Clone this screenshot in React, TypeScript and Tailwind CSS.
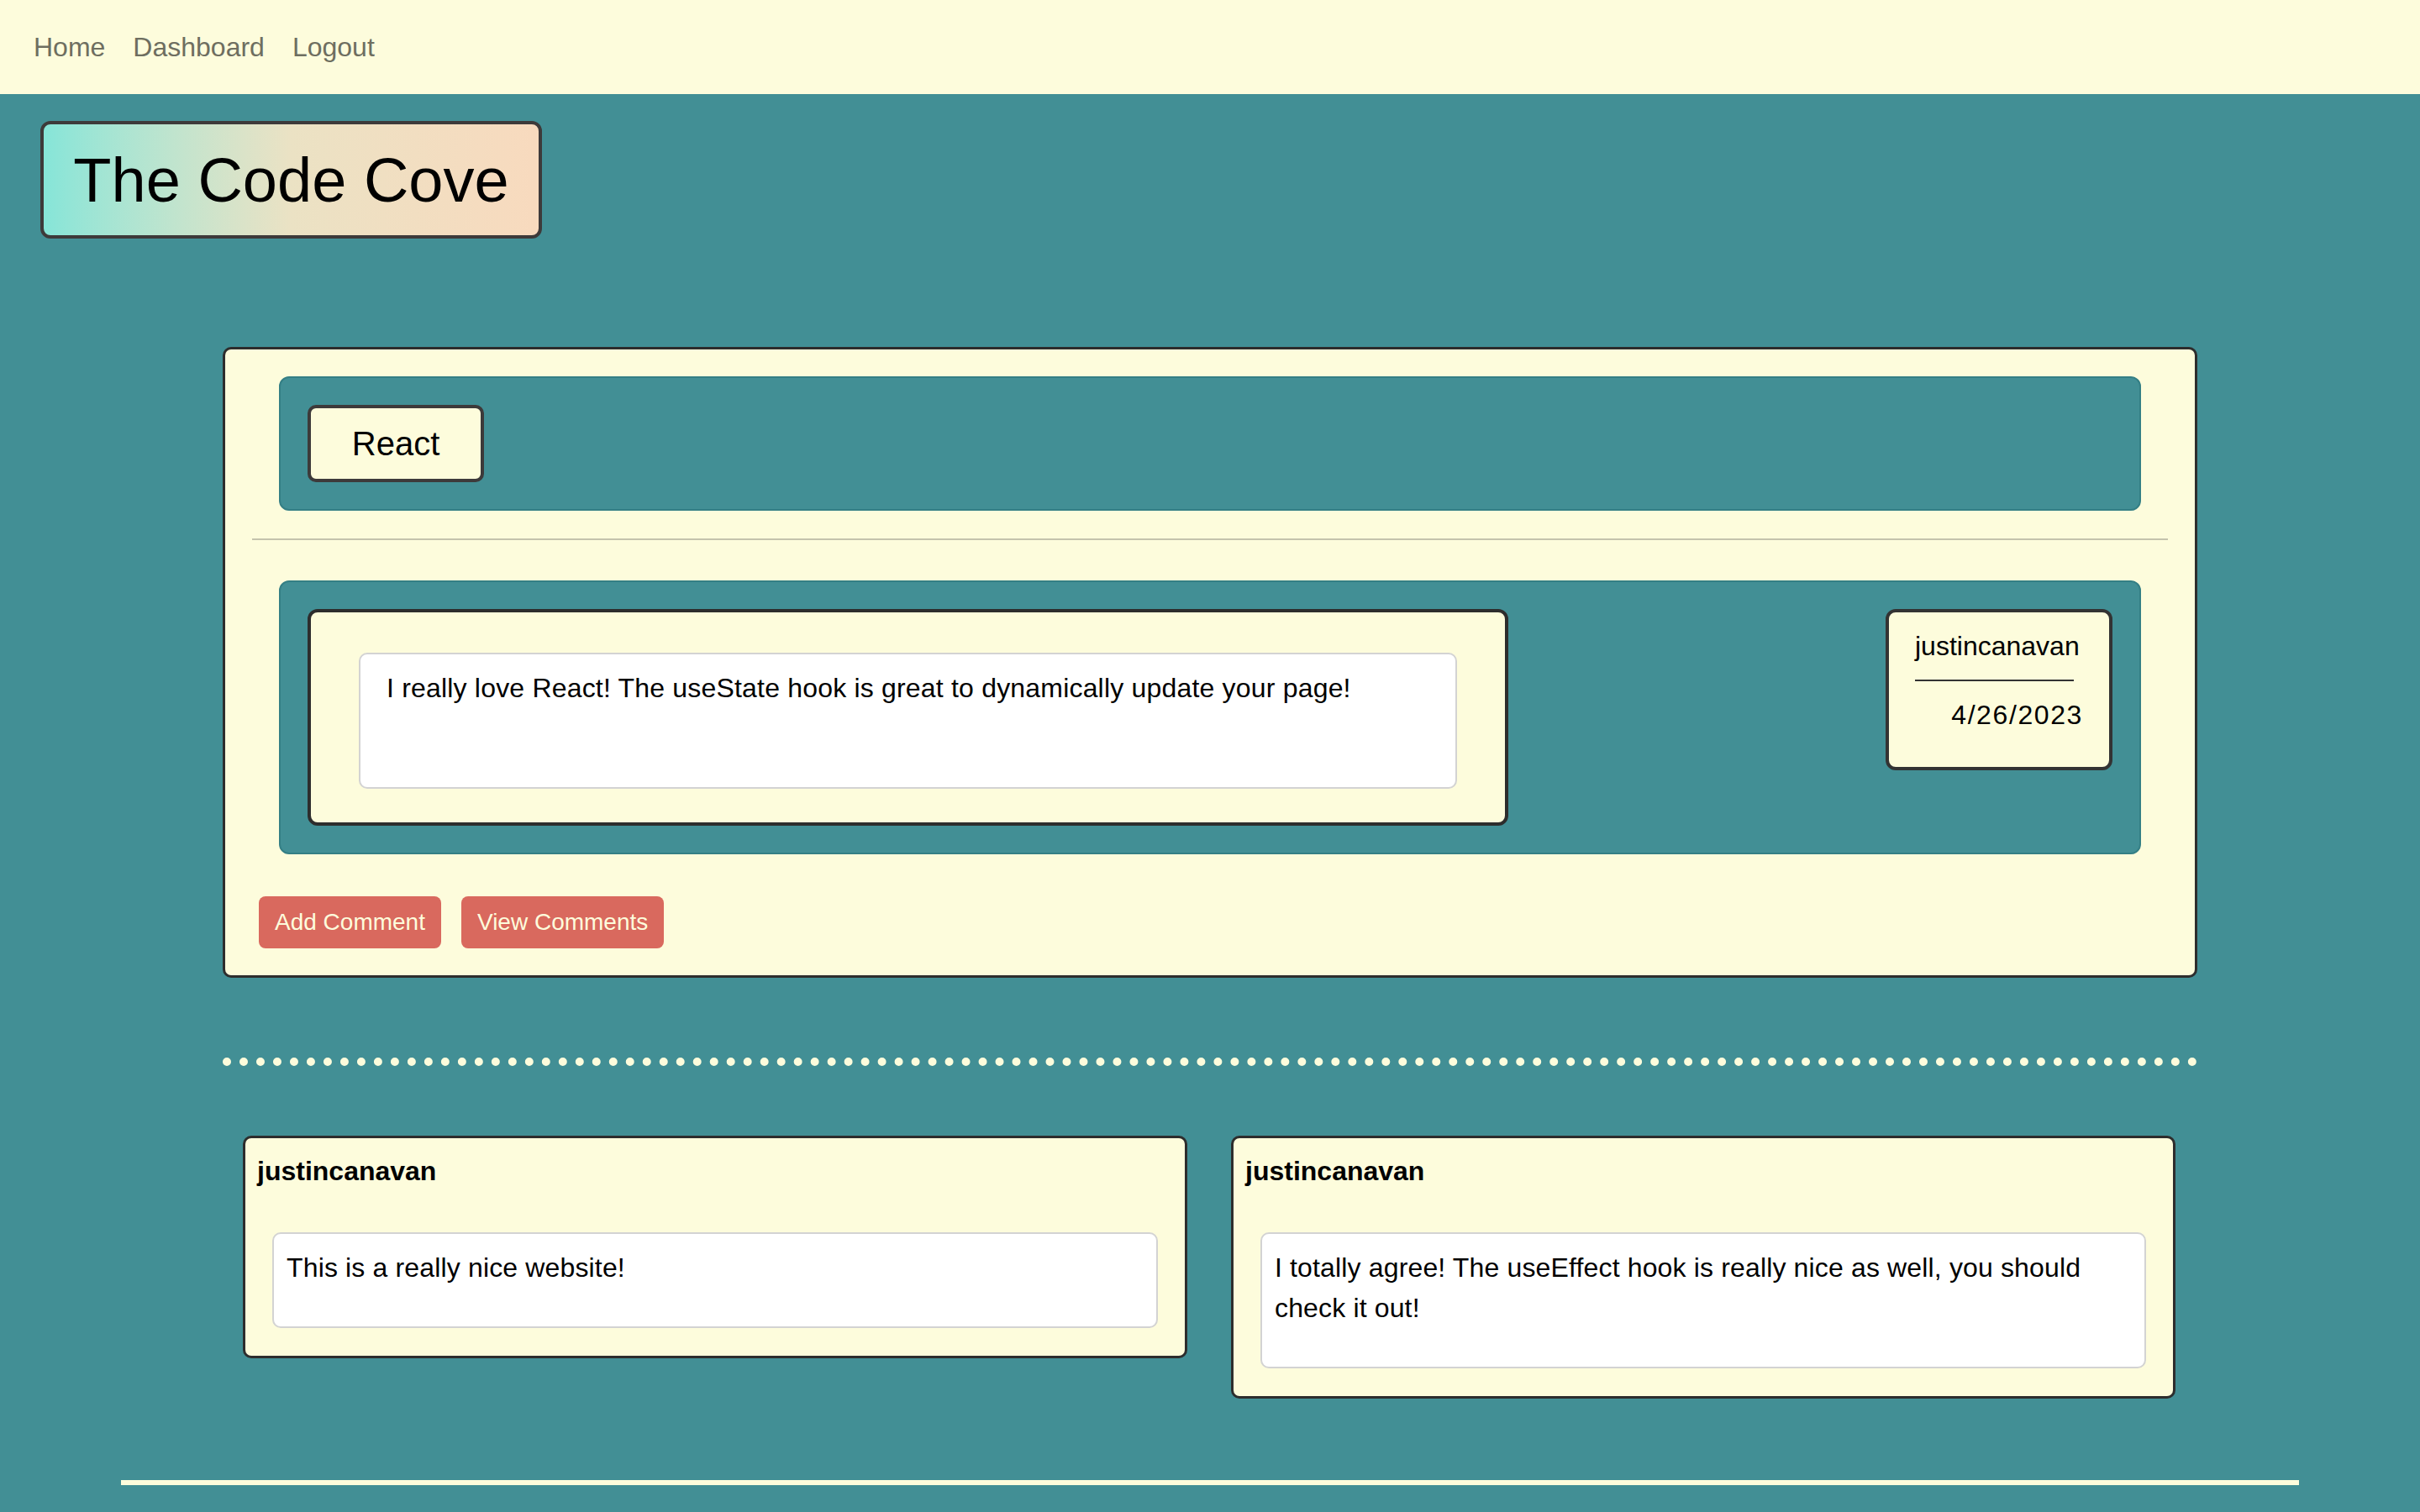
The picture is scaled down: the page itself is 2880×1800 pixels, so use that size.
import React from "react";

const font = { fontFamily: '"Liberation Sans", Arial, sans-serif' };

export default function App() {
  return (
    <div style={font} className="min-h-[1800px] bg-[#428f95] text-black">
      <nav className="flex h-[112px] items-center gap-[33px] bg-[#fdfcdc] pl-[40px] text-[32px] text-[#6e6e60]">
        <a>Home</a>
        <a>Dashboard</a>
        <a>Logout</a>
      </nav>

      <div className="ml-[48px] mt-[32px] flex h-[140px] w-[597px] items-center justify-center rounded-[12px] border-[4px] border-[#3d3a3a] bg-linear-to-r from-[#86e5d8] via-[#ebe2c4] to-[#f8dabe]">
        <h1 className="pt-[2px] text-[74px] leading-none">The Code Cove</h1>
      </div>

      <div className="mx-auto mt-[129px] w-[2350px] rounded-[10px] border-[3px] border-[#2d2d2d] bg-[#fdfcdc] px-[32px] pb-[32px] pt-[32px]">
        <div className="mx-[32px] rounded-[12px] border-2 border-[#347f85] bg-[#428f95] p-[32px]">
          <div className="flex h-[92px] w-[210px] items-center justify-center rounded-[10px] border-[4px] border-[#3d3a3a] bg-[#fdfcdc] text-[40px]">
            React
          </div>
        </div>

        <div className="mt-[33px] h-[2px] w-full bg-[#c4c3ad]" />

        <div className="mx-[32px] mt-[48px] flex items-start justify-between rounded-[12px] border-2 border-[#347f85] bg-[#428f95] p-[32px]">
          <div className="w-[1429px] rounded-[12px] border-[4px] border-[#2d2d2d] bg-[#fdfcdc] px-[57px] pb-[40px] pt-[48px]">
            <div className="h-[162px] rounded-[10px] border-2 border-[#d3d3d3] bg-white px-[31px] pt-[16px] text-[32px] leading-[48px] tracking-[0.19px]">
              I really love React! The useState hook is great to dynamically update your page!
            </div>
          </div>
          <div className="w-[270px] rounded-[12px] border-[4px] border-[#333] bg-[#fdfcdc] px-[31px] pb-[43px] pt-[22px] text-[32px]">
            <div className="leading-[37px]">justincanavan</div>
            <div className="mt-[21px] h-[2px] w-[189px] bg-[#333]" />
            <div className="mt-[22px] text-right leading-[37px] tracking-[1.6px]">4/26/2023</div>
          </div>
        </div>

        <div className="ml-[8px] mt-[50px] flex gap-[24px]">
          <button className="h-[62px] rounded-[8px] bg-[#d9695e] px-[19px] text-[28px] text-[#fdfcdc]">
            Add Comment
          </button>
          <button className="h-[62px] rounded-[8px] bg-[#d9695e] px-[19px] text-[28px] text-[#fdfcdc]">
            View Comments
          </button>
        </div>
      </div>

      <div className="mx-auto mt-[95px] w-[2350px] border-t-[10px] border-dotted border-[#fdfcdc]" />

      <div className="mx-auto mt-[83px] flex w-[2350px] items-start gap-[52px] px-[24px]">
        {[
          "This is a really nice website!",
          "I totally agree! The useEffect hook is really nice as well, you should check it out!",
        ].map((t, i) => (
          <div
            key={i}
            className="w-[1124px] rounded-[10px] border-[3px] border-[#2d2d2d] bg-[#fdfcdc]"
          >
            <div className="px-[14px] pt-[15px] text-[32px] font-bold leading-[48px]">
              justincanavan
            </div>
            <div className="mx-[32px] mb-[33px] mt-[49px] rounded-[10px] border-2 border-[#d3d3d3] bg-white px-[15px] pb-[46px] pt-[16px] text-[32px] leading-[48px] tracking-[0.15px]">
              {t}
            </div>
          </div>
        ))}
      </div>

      <div className="mx-auto mt-[97px] h-[6px] w-[90%] bg-[#fdfcdc]" />
    </div>
  );
}
